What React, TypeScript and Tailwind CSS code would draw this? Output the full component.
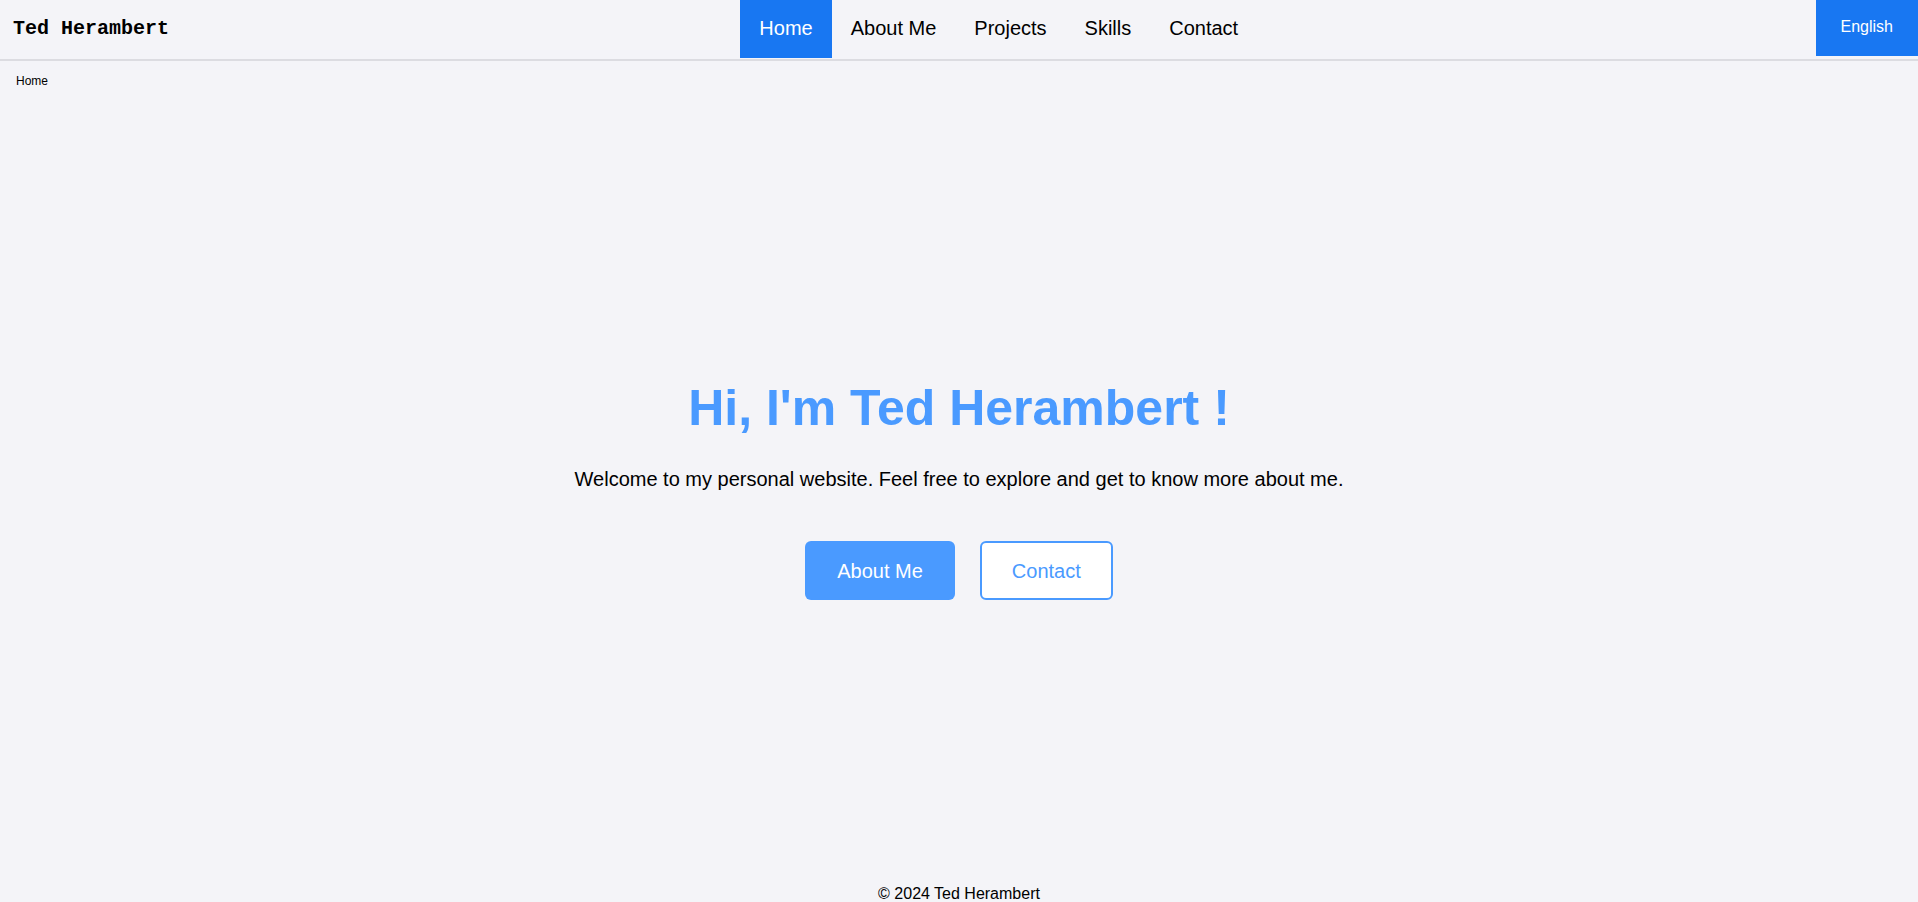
const navItems = ['Home', 'About Me', 'Projects', 'Skills', 'Contact'];

export default function App() {
  return (
    <div className="min-h-screen bg-[#f4f4f8] text-black font-['Liberation_Sans',Arial,sans-serif]">
      <header className="flex h-[61px] items-start justify-between border-b-2 border-[#dcdce1]">
        <div className="flex h-[57px] items-center px-[13px] font-['Liberation_Mono','Courier_New',monospace] text-[20px] font-bold">
          Ted Herambert
        </div>
        <nav className="flex">
          {navItems.map(item => (
            <a
              key={item}
              href="#"
              className={
                item === 'Home'
                  ? 'flex h-[58px] items-center bg-[#1877f2] px-[19px] pb-[2px] text-[20px] text-white'
                  : 'flex h-[58px] items-center px-[19px] pb-[2px] text-[20px] text-black'
              }
            >
              {item}
            </a>
          ))}
        </nav>
        <button className="flex h-[56px] items-center bg-[#1877f2] px-[25px] pb-[3px] text-[16px] text-white">
          English
        </button>
      </header>

      <div className="mt-[12px] pl-4 text-[12px] leading-[16px]">Home</div>

      <main className="flex flex-col items-center pt-[289px] pb-[282px] text-center">
        <h1 className="text-[50px] font-bold leading-[60px] text-[#4a9aff]">
          Hi, I'm Ted Herambert !
        </h1>
        <p className="mt-[27px] text-[20px] leading-[28px]">
          Welcome to my personal website. Feel free to explore and get to know more about me.
        </p>
        <div className="mt-[48px] flex gap-[25px]">
          <a
            href="#"
            className="flex h-[59px] items-center rounded-md bg-[#4a9aff] px-8 text-[20px] text-white"
          >
            About Me
          </a>
          <a
            href="#"
            className="flex h-[59px] items-center rounded-md border-2 border-[#4a9aff] bg-white px-[30px] text-[20px] text-[#4a9aff]"
          >
            Contact
          </a>
        </div>
      </main>

      <footer className="pb-4 text-center text-[16px] leading-[24px]">© 2024 Ted Herambert</footer>
    </div>
  );
}
